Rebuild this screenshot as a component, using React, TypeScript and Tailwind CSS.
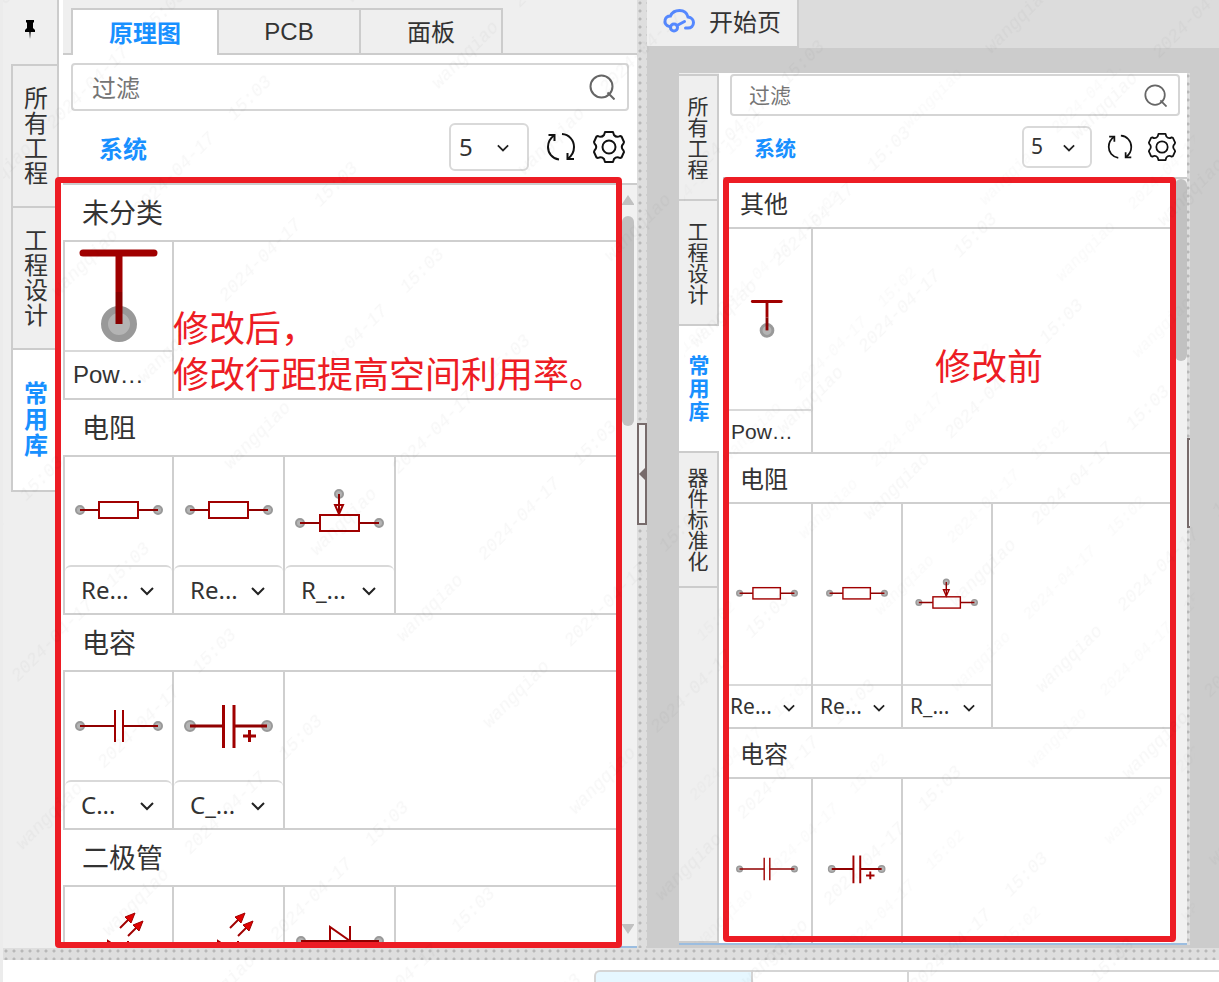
import React from 'react';
import clsx from 'clsx';

type SymbolKind = 'power' | 'resistor' | 'trimmer' | 'cap' | 'polarCap' | 'led' | 'diode';

interface Part {
    kind: SymbolKind;
    label: string;
    hasVariants?: boolean;
}

interface Category {
    title: string;
    parts: Part[];
}

interface SideTab {
    name: string;
    active?: boolean;
}

const resistors: Part[] = [
    { kind: 'resistor', label: 'Re...', hasVariants: true },
    { kind: 'resistor', label: 'Re...', hasVariants: true },
    { kind: 'trimmer', label: 'R_...', hasVariants: true }
];

const denseCategories: Category[] = [
    { title: '未分类', parts: [{ kind: 'power', label: 'Pow…' }] },
    { title: '电阻', parts: resistors },
    {
        title: '电容',
        parts: [
            { kind: 'cap', label: 'C...', hasVariants: true },
            { kind: 'polarCap', label: 'C_...', hasVariants: true }
        ]
    },
    {
        title: '二极管',
        parts: [
            { kind: 'led', label: '' },
            { kind: 'led', label: '' },
            { kind: 'diode', label: '' }
        ]
    }
];

const looseCategories: Category[] = [
    { title: '其他', parts: [{ kind: 'power', label: 'Pow…' }] },
    { title: '电阻', parts: resistors },
    {
        title: '电容',
        parts: [
            { kind: 'cap', label: '' },
            { kind: 'polarCap', label: '' }
        ]
    }
];

const looseSymbolSizes: Record<SymbolKind, string> = {
    power: 'size-11',
    resistor: 'size-[76px]',
    trimmer: 'size-[76px]',
    cap: 'size-[76px]',
    polarCap: 'size-[70px]',
    led: 'size-[76px]',
    diode: 'size-[76px]'
};

const Pin: React.FC<{ x: number; y: number; r?: number }> = ({ x, y, r = 4 }) => (
    <circle cx={x} cy={y} r={r} fill="#b4b4b4" stroke="#999" strokeWidth={2} />
);

const LedArrow: React.FC<{ x: number; y: number }> = ({ x, y }) => (
    <g transform={`translate(${x} ${y})`}>
        <path d="M0 15 L10 5" />
        <path d="M15 0 L5 4 L11 10 Z" fill="#e00000" strokeWidth={1} />
    </g>
);

const PartSymbol: React.FC<{ kind: SymbolKind; className: string }> = ({ kind, className }) => (
    <svg viewBox="0 0 108 108" className={clsx('shrink-0', className)} fill="none" stroke="#a00000" strokeWidth={2} aria-hidden="true">
        {kind === 'power' && (
            <>
                <circle cx="54" cy="82" r="14.5" fill="#b4b4b4" stroke="#999" strokeWidth={7} />
                <path d="M18 11 H89" strokeWidth={7} strokeLinecap="round" />
                <path d="M54 11 V50" strokeWidth={7} />
                <path d="M54 50 V82" stroke="#880000" strokeWidth={7} />
            </>
        )}
        {kind === 'resistor' && (
            <>
                <Pin x={15} y={53} />
                <Pin x={93} y={53} />
                <path d="M15 53 H34 M73 53 H93" stroke="#900000" />
                <rect x="34" y="45" width="39" height="16" />
            </>
        )}
        {kind === 'trimmer' && (
            <>
                <Pin x={14} y={66} />
                <Pin x={93} y={66} />
                <Pin x={53} y={37} />
                <path d="M14 66 H34 M73 66 H93 M53 37 V57" stroke="#900000" />
                <rect x="34" y="58" width="39" height="16" />
                <path d="M49 48 H57 L53 57 Z" />
            </>
        )}
        {kind === 'cap' && (
            <>
                <Pin x={15} y={54} />
                <Pin x={93} y={54} />
                <path d="M15 54 H50 M58 54 H93" stroke="#900000" />
                <path d="M50 38 V70 M58 38 V70" />
            </>
        )}
        {kind === 'polarCap' && (
            <>
                <Pin x={15} y={54} r={5} />
                <Pin x={92} y={54} r={5} />
                <path d="M15 54 H48 M59 54 H92" stroke="#900000" strokeWidth={3} />
                <path d="M48.500 33 V76 M59 33 V76" strokeWidth={3} />
                <path d="M68 64 H81 M74.500 58 V70" strokeWidth={3} />
            </>
        )}
        {kind === 'led' && (
            <>
                <LedArrow x={55} y={26} />
                <LedArrow x={63} y={34} />
                <path d="M43 54 V80 L63 67 Z M63 54 V80 M15 67 H93" />
            </>
        )}
        {kind === 'diode' && (
            <>
                <Pin x={15} y={54} />
                <Pin x={93} y={54} />
                <path d="M15 54 H93" stroke="#900000" />
                <path d="M44 40 V68 L64 54 Z M64 39 V69" />
            </>
        )}
    </svg>
);

const Chevron: React.FC<{ className?: string }> = ({ className }) => (
    <svg viewBox="0 0 14 14" className={clsx('pointer-events-none shrink-0', className)} fill="none" stroke="#222" strokeWidth={2} aria-hidden="true">
        <path d="M1 5 L7 11 L13 5" />
    </svg>
);

const SearchIcon: React.FC<{ className: string }> = ({ className }) => (
    <svg viewBox="0 0 26 26" className={className} fill="none" stroke="#666" strokeWidth={2} aria-hidden="true">
        <circle cx="12.5" cy="12.5" r="11" />
        <path d="M18.500 18.500 L25.500 25.500" />
    </svg>
);

const RefreshIcon: React.FC<{ className: string }> = ({ className }) => (
    <svg viewBox="0 0 30 30" className={className} fill="none" stroke="#111" strokeWidth={2} aria-hidden="true">
        <path d="M13 27.500 C6 26.500 2 21 2 15 C2 10 4.500 6 8 3.500" />
        <path d="M2.500 3 H8.500 V9" />
        <path d="M16 2 C23 2.500 28 8 28 15 C28 20 25.500 24 22 26.500" />
        <path d="M28 27 H21.500 V21" />
    </svg>
);

const GearIcon: React.FC<{ className: string }> = ({ className }) => (
    <svg viewBox="0 0 32 32" className={className} fill="none" stroke="#111" strokeWidth={2} strokeLinejoin="round" aria-hidden="true">
        <path d="M12 1 H20 L21 4 Q23.500 7 27 5 L28.500 5.500 L31 11 L30.500 12.500 Q27 16 30.500 19.500 L31 21 L28.500 26.500 L27 27 Q23.500 25 21 28 L20 31 H12 L11 28 Q8.500 25 5 27 L3.500 26.500 L1 21 L1.500 19.500 Q5 16 1.500 12.500 L1 11 L3.500 5.500 L5 5 Q8.500 7 11 4 Z" />
        <circle cx="16" cy="16" r="6.5" />
    </svg>
);

const PartCell: React.FC<{ part: Part; dense?: boolean; first?: boolean }> = ({ part, dense, first }) => (
    <div className={clsx('shrink-0 border-r-2 border-[#cfcfcf]', dense ? 'w-[111px]' : 'w-[90px]', dense && first && 'border-l-2')}>
        <div className={clsx('flex items-center justify-center overflow-hidden', dense ? 'h-[108px]' : 'h-[180px]')}>
            <PartSymbol kind={part.kind} className={dense ? 'size-[108px]' : looseSymbolSizes[part.kind]} />
        </div>
        <div
            className={clsx(
                'flex items-center border-t-2 border-[#d9d9d9] text-[#333]',
                dense ? 'h-12 text-2xl' : 'h-[43px] text-[21px]',
                part.hasVariants && dense && 'rounded-t-md',
                part.hasVariants ? (dense ? 'pr-[18px] pl-4' : 'pr-4 pl-[7px]') : 'pl-2'
            )}
        >
            {part.hasVariants ? (
                <>
                    <select
                        aria-label="器件型号"
                        className="min-w-0 flex-1 appearance-none bg-transparent font-[family-name:'Noto_Sans','Noto_Sans_CJK_SC',sans-serif] outline-none"
                    >
                        <option>{part.label}</option>
                    </select>
                    <Chevron className={dense ? 'size-[14px]' : 'size-3'} />
                </>
            ) : (
                <span className="font-[family-name:'Liberation_Sans',sans-serif]">{part.label}</span>
            )}
        </div>
    </div>
);

const CategoryList: React.FC<{ categories: Category[]; dense?: boolean }> = ({ categories, dense }) => (
    <div className="min-w-0 flex-1 overflow-hidden bg-white">
        {categories.map(category => (
            <section key={category.title}>
                <h3 className={clsx('flex items-center text-[#333]', dense ? 'h-[55px] pl-[19px] text-[27px]' : 'h-12 pl-[17px] text-2xl')}>
                    {category.title}
                </h3>
                <div className="flex border-y-2 border-[#cfcfcf]">
                    {category.parts.map((part, i) => (
                        <PartCell key={i} part={part} dense={dense} first={i === 0} />
                    ))}
                </div>
            </section>
        ))}
    </div>
);

const Toolbar: React.FC<{ dense?: boolean }> = ({ dense }) => (
    <>
        <label
            className={clsx(
                'flex shrink-0 items-center rounded border-2 border-[#d5d5d5] bg-white',
                dense ? 'mt-2 mr-2 ml-2 h-12 pr-3 pl-[19px]' : 'mt-px mr-[7px] ml-[7px] h-[42px] pr-[11px] pl-[17px]'
            )}
        >
            <input
                type="text"
                aria-label="过滤"
                placeholder="过滤"
                className={clsx('min-w-0 flex-1 outline-none placeholder:text-[#757575]', dense ? 'text-2xl' : 'text-[21px]')}
            />
            <SearchIcon className={dense ? 'size-[26px]' : 'size-[23px]'} />
        </label>
        <div className={clsx('flex shrink-0 items-center', dense ? 'mt-3 mb-3 h-12 pr-3 pl-9' : 'mt-2.5 mb-[9px] h-[42px] pr-[11px] pl-[31px]')}>
            <h2 className={clsx('flex-1 pt-0.5 font-bold text-[#1890ff]', dense ? 'text-2xl' : 'text-[21px]')}>系统</h2>
            <div
                className={clsx(
                    'flex items-center rounded-md border-2 border-[#d9d9d9]',
                    dense ? 'h-12 w-20 pr-[18px] pl-2' : 'h-[42px] w-[70px] pr-[15px] pl-[7px]'
                )}
            >
                <select
                    aria-label="每行数量"
                    className={clsx(
                        "min-w-0 flex-1 appearance-none bg-transparent font-[family-name:'Noto_Sans',sans-serif] text-[#333] outline-none",
                        dense ? 'text-2xl' : 'text-[21px]'
                    )}
                >
                    <option>5</option>
                </select>
                <Chevron className="size-3" />
            </div>
            <button type="button" aria-label="刷新" className={dense ? 'ml-[17px]' : 'ml-[15px]'}>
                <RefreshIcon className={dense ? 'size-[30px]' : 'size-[26px]'} />
            </button>
            <button type="button" aria-label="设置" className={dense ? 'ml-[17px]' : 'ml-[15px]'}>
                <GearIcon className={dense ? 'size-8' : 'size-7'} />
            </button>
        </div>
    </>
);

const denseSideTabs: SideTab[] = [{ name: '所有工程' }, { name: '工程设计' }, { name: '常用库', active: true }];
const looseSideTabs: SideTab[] = [...denseSideTabs, { name: '器件标准化' }];

const AfterPanel: React.FC = () => (
    <div className="flex min-h-0 min-w-0">
        <nav className="flex w-14 shrink-0 flex-col bg-[#efefef] font-[family-name:'Liberation_Sans','Noto_Sans_CJK_SC',sans-serif]">
            <div className="flex h-16 shrink-0 items-center justify-center border-r-2 border-[#ccc] pb-1">
                <svg viewBox="0 0 12 20" className="h-5 w-3" aria-label="固定">
                    <path d="M2 0 H10 V2 L9 3 V8 L11 10 V12 H1 V10 L3 8 V3 L2 2 Z" fill="#000" />
                    <path d="M5 12 H7 L6 19 Z" fill="#444" />
                </svg>
            </div>
            {denseSideTabs.map(tab => (
                <button
                    key={tab.name}
                    type="button"
                    className={clsx(
                        'ml-2 flex shrink-0 items-center justify-center border-t-2 border-l-2 border-[#ccc] text-2xl',
                        tab.active ? 'h-36 border-b-2 bg-white font-bold text-[#1890ff]' : 'h-[142px] border-r-2 pl-0.5 text-[#333]'
                    )}
                >
                    <span className={clsx('w-6 break-all', tab.active ? 'leading-[26px]' : 'leading-[25px]')}>{tab.name}</span>
                </button>
            ))}
        </nav>
        <div className="flex min-w-0 flex-1 flex-col border-l-4 border-white bg-white">
            <div className="flex h-[55px] shrink-0 items-end bg-[#efefef] font-[family-name:'Liberation_Sans','Noto_Sans_CJK_SC',sans-serif] text-2xl text-[#333]">
                <span className="w-2 self-stretch border-b-2 border-[#ccc]" />
                <button type="button" className="h-[47px] w-[148px] border-x-2 border-t-2 border-[#ccc] bg-white pt-0.5 font-bold text-[#1890ff]">
                    原理图
                </button>
                <button type="button" className="h-[47px] w-[142px] border-y-2 border-r-2 border-[#ccc]">
                    PCB
                </button>
                <button type="button" className="h-[47px] w-[142px] border-y-2 border-r-2 border-[#ccc] pt-0.5">
                    面板
                </button>
                <span className="flex-1 self-stretch border-b-2 border-[#ccc]" />
            </div>
            <Toolbar dense />
            <div className="relative flex min-h-0 flex-1 border-t-2 border-b-2 border-t-[#ccc] border-b-[#9bbde0]">
                <CategoryList categories={denseCategories} dense />
                <div className="flex w-[18px] shrink-0 flex-col items-center bg-[#f1f1f1] pt-2.5 pb-3">
                    <svg viewBox="0 0 12 10" className="h-2.5 w-3" aria-hidden="true">
                        <path d="M6 0 L12 9 V10 H0 V9 Z" fill="#c1c1c1" />
                    </svg>
                    <div className="mt-[11px] h-[210px] w-3 rounded-md bg-[#c1c1c1]" />
                    <svg viewBox="0 0 12 10" className="mt-auto h-2.5 w-3" aria-hidden="true">
                        <path d="M6 10 L12 1 V0 H0 V1 Z" fill="#c1c1c1" />
                    </svg>
                </div>
                <div className="pointer-events-none absolute -top-2 right-[15px] -bottom-0.5 -left-2 rounded-sm border-6 border-[#ed1c24]" />
                <p className="absolute top-[122px] left-[110px] font-[family-name:'Liberation_Sans','Noto_Sans_CJK_SC',sans-serif] text-4xl leading-[46px] whitespace-nowrap text-[#ed1c24]">
                    修改后，
                    <br />
                    修改行距提高空间利用率。
                </p>
            </div>
        </div>
    </div>
);

const BeforePanel: React.FC = () => (
    <div className="flex min-h-0 flex-1">
        <div className="flex min-w-0 flex-1 border-b-2 border-[#9bbde0] bg-white">
            <nav className="flex w-10 shrink-0 flex-col bg-[#efefef] pt-px font-[family-name:'Liberation_Sans','Noto_Sans_CJK_SC',sans-serif]">
                {looseSideTabs.map(tab => (
                    <button
                        key={tab.name}
                        type="button"
                        className={clsx(
                            'flex shrink-0 items-center justify-center border-t-2 border-[#ccc] text-[21px]',
                            tab.name.length > 4 ? 'h-[135px]' : tab.active ? 'h-[127px]' : 'h-[125px]',
                            tab.active ? 'bg-white font-bold text-[#1890ff]' : 'border-r-2 text-[#333]'
                        )}
                    >
                        <span className={clsx('w-[21px] break-all', tab.active ? 'leading-[23px]' : 'leading-[21px]')}>{tab.name}</span>
                    </button>
                ))}
                <div className="flex-1 border-t-2 border-r-2 border-b-2 border-[#ccc]" />
            </nav>
            <div className="flex min-w-0 flex-1 flex-col pl-1">
                <Toolbar />
                <div className="relative flex min-h-0 flex-1 border-t-2 border-[#ccc]">
                    <CategoryList categories={looseCategories} />
                    <div className="w-4 shrink-0 bg-[#f1f1f1] pl-1">
                        <div className="h-[182px] rounded-md bg-[#c1c1c1]" />
                    </div>
                    <div className="pointer-events-none absolute -top-0.5 right-[11px] bottom-px left-0 rounded-sm border-6 border-[#ed1c24]" />
                    <p className="absolute top-[166px] left-[212px] font-[family-name:'Liberation_Sans','Noto_Sans_CJK_SC',sans-serif] text-4xl leading-[46px] whitespace-nowrap text-[#ed1c24]">
                        修改前
                    </p>
                </div>
            </div>
        </div>
        <div className="flex w-[3px] shrink-0 items-center bg-[#dedede] bg-[radial-gradient(circle_at_1px_3px,#b8b8b8_1px,transparent_2px)] bg-size-[8px_8px] pb-[52px]">
            <div className="h-[90px] w-full border-y-2 border-l-2 border-[#776b6b] bg-[#f0f0f0]" />
        </div>
    </div>
);

// Two stamps at slightly different scales, the embedded capture carries its own
const Watermark: React.FC = () => (
    <svg className="pointer-events-none absolute inset-0 size-full" aria-hidden="true">
        <defs>
            <pattern id="stamp" width="416" height="122" patternUnits="userSpaceOnUse" patternTransform="rotate(-45) translate(-200 -61)">
                <g className="fill-black/3 font-[family-name:'Liberation_Mono',monospace] text-[18px] italic" textAnchor="middle">
                    <text x="72" y="66">wangqiao</text>
                    <text x="198" y="66">2024-04-17</text>
                    <text x="305" y="66">15:03</text>
                </g>
            </pattern>
            <pattern id="stamp-inner" width="364" height="108" patternUnits="userSpaceOnUse" patternTransform="rotate(-45) translate(-200 25)">
                <g className="fill-black/2 font-[family-name:'Liberation_Mono',monospace] text-[16px] italic" textAnchor="middle">
                    <text x="60" y="59">wangqiao</text>
                    <text x="171" y="59">2024-04-17</text>
                    <text x="265" y="59">15:02</text>
                </g>
            </pattern>
        </defs>
        <rect width="100%" height="100%" fill="url(#stamp)" />
        <rect x="56%" y="7%" width="42%" height="89%" fill="url(#stamp-inner)" />
    </svg>
);

export default function App() {
    return (
        <div className="relative flex h-screen flex-col overflow-hidden border-l-3 border-[#ececec] bg-white font-[family-name:'Noto_Sans_CJK_SC',sans-serif]">
            <main className="grid min-h-0 flex-1 grid-cols-[634fr_10px_572fr] grid-rows-[minmax(0,1fr)]">
                <AfterPanel />
                <div className="flex items-center bg-[#dedede] bg-[radial-gradient(circle_at_3px_3px,#b8b8b8_1px,transparent_2px)] bg-size-[8px_8px]">
                    <button
                        type="button"
                        aria-label="收起面板"
                        className="flex h-[102px] w-full items-center justify-end border-2 border-[#776b6b] bg-[#f0f0f0]"
                    >
                        <svg viewBox="0 0 6 12" className="h-3 w-1.5" aria-hidden="true">
                            <path d="M6 0 V12 L0 6 Z" fill="#776b6b" />
                        </svg>
                    </button>
                </div>
                <div className="flex min-h-0 min-w-0 flex-col bg-[#ccc]">
                    <div className="flex h-12 shrink-0 bg-[#dcdcdc]">
                        <button
                            type="button"
                            className="flex items-center gap-3.5 border-r-2 border-b-2 border-[#ccc] bg-[#efefef] px-4 pb-1 text-2xl text-[#333]"
                        >
                            <svg viewBox="0 0 32 24" className="h-6 w-8" fill="none" stroke="#5588ff" strokeWidth={3} strokeLinecap="round" aria-hidden="true">
                                <path d="M6.500 17.500 C3 17 1.500 14 2 11.500 C2.500 8.500 5 7 7.500 7 C9 3.500 12.500 1.500 16.500 1.500 C21 1.500 24 4 25 8 C28.500 8.500 30.500 11 30.500 13.500 C30.500 17 28 19 25 19 H22.500" />
                                <circle cx="11" cy="18.500" r="3.500" />
                                <path d="M14 16.500 L21.500 12.500" />
                            </svg>
                            开始页
                        </button>
                    </div>
                    <div className="flex min-h-0 flex-1 pt-[25px] pr-[29px] pb-[3px] pl-8">
                        <BeforePanel />
                    </div>
                </div>
            </main>
            <div className="h-3 shrink-0 bg-[#dedede] bg-[radial-gradient(circle_at_3px_3px,#b8b8b8_1px,transparent_2px)] bg-size-[8px_8px]" />
            <div className="flex h-[22px] shrink-0 pt-2.5 pl-[591px]">
                <div className="w-[157px] rounded-tl-md border-t-2 border-l-2 border-[#d5d5d5] bg-[#e6f7ff]" />
                <div className="w-[156px] border-t-2 border-l-2 border-[#d5d5d5]" />
                <div className="flex-1 border-t-2 border-l-2 border-[#d5d5d5]" />
            </div>
            <Watermark />
        </div>
    );
}
